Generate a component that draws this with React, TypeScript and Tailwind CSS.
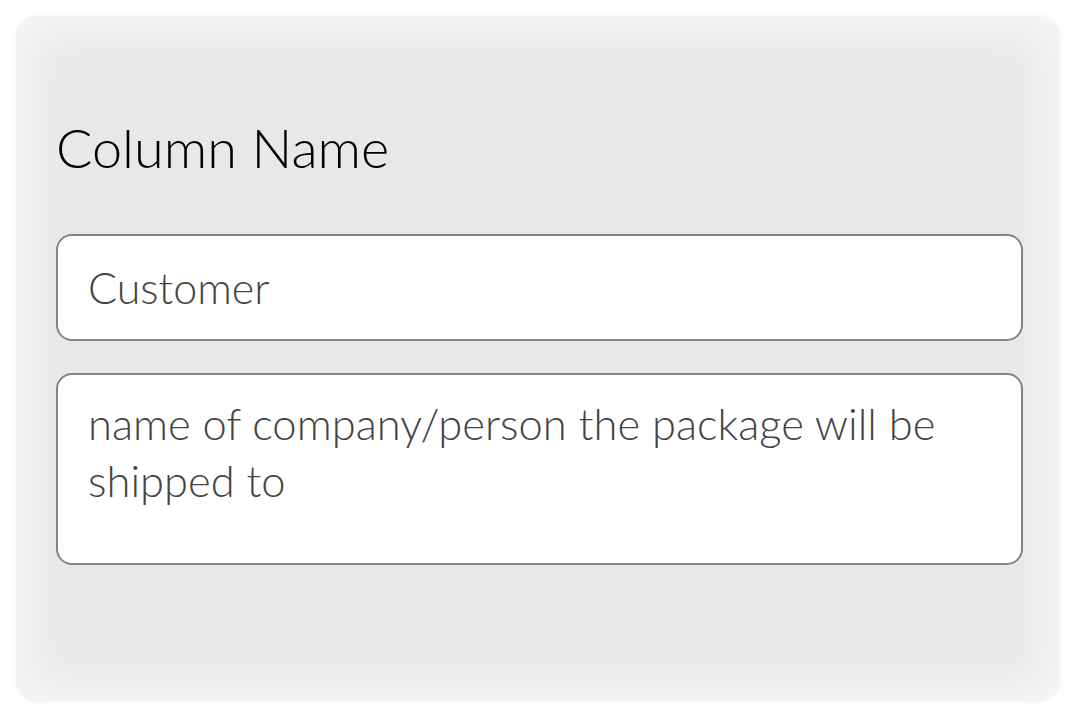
import React from "react";

export default function App() {
  return (
    <div className="w-[1080px] h-[720px] bg-white pt-[16px] pb-[18px] pl-[16px] pr-[20px]" style={{ fontFamily: "Lato, 'Open Sans', sans-serif" }}>
      <div className="h-full rounded-[22px] bg-[#e8e8e8] shadow-[inset_0_0_40px_16px_#f6f6f6,0_0_4px_2px_#fafafa] pl-[40px] pr-[37px] pt-[92px]">
        <div className="text-[54px] leading-[80px] font-light text-black">Column Name</div>
        <div className="mt-[46px] h-[107px] rounded-[16px] border-2 border-[#7b8a80] bg-white pl-[30px] flex items-center">
          <span className="text-[43px] font-light text-[#444444] leading-none">Customer</span>
        </div>
        <div className="mt-[32px] h-[192px] rounded-[16px] border-2 border-[#7b8a80] bg-white pl-[30px] pr-[40px] pt-[20px]">
          <p className="text-[43.5px] font-light text-[#444444] leading-[57px]">
            name of company/person the package will be shipped to
          </p>
        </div>
      </div>
    </div>
  );
}
